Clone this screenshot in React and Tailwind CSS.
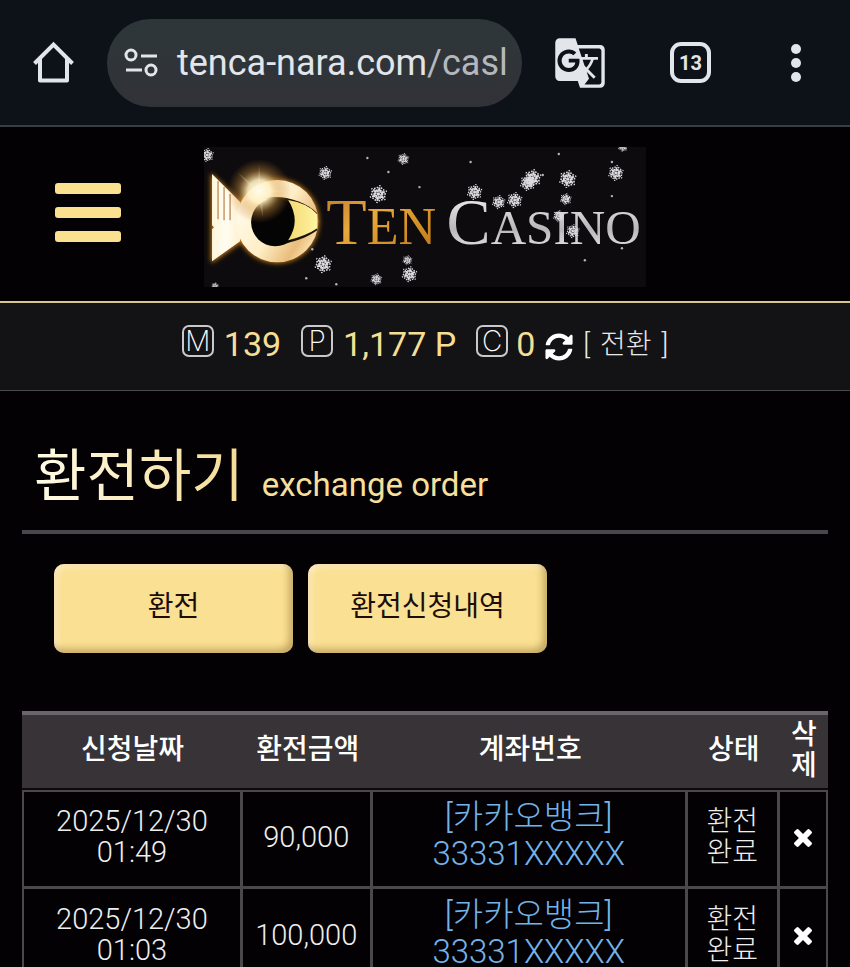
import { MdGTranslate } from "react-icons/md";
import { FaSyncAlt } from "react-icons/fa";

const orders = [
  { id: 1, date: "2025/12/30", time: "01:49", amount: "90,000", bank: "카카오뱅크", account: "33331XXXXX" },
  { id: 2, date: "2025/12/30", time: "01:03", amount: "100,000", bank: "카카오뱅크", account: "33331XXXXX" },
];

// x, y, radius
const flakes = [
  [3, 8, 7],
  [121, 26, 7],
  [199, 12, 6],
  [174, 47, 9],
  [119, 117, 9],
  [172, 132, 6],
  [203, 113, 5],
  [205, 127, 8],
  [11, 139, 4],
  [270, 45, 8],
  [294, 55, 7],
  [310, 53, 8],
  [328, 31, 9],
  [323, 36, 8],
  [325, 34, 5],
  [363, 32, 9],
  [361, 52, 6],
  [354, 69, 6],
  [368, 84, 7],
  [411, 26, 8],
  [418, 0, 5],
];

const specks = [
  [163, 11], [184, 25], [215, 40], [108, 102], [102, 131], [132, 137],
  [266, 15], [354, 7], [338, 28], [407, 49], [407, 15], [380, 113], [417, 101], [357, 84],
];

const Snowflake = ({ x, y, r }) => (
  <g transform={`translate(${x} ${y}) scale(${r / 10})`} stroke="#dcdce0" strokeWidth="1.8" fill="none">
    {[10, 70, 130, 190, 250, 310].map((deg) => (
      <path
        key={deg}
        transform={`rotate(${deg})`}
        strokeDasharray="1.8 1.1"
        d="M0 0V-10M0 -4L-3 -8M0 -4L3 -8M-3 -3L0 -6L3 -3"
      />
    ))}
    <circle r="3" strokeDasharray="2 1" />
  </g>
);

const Logo = () => (
  <svg viewBox="0 0 441 140" className="w-full" role="img" aria-label="Ten Casino">
    <defs>
      <linearGradient id="fish" x1="0" y1="0.2" x2="1" y2="0.8">
        <stop offset="0" stopColor="#fffdf0" />
        <stop offset="0.5" stopColor="#ffeec6" />
        <stop offset="0.8" stopColor="#e9bd7c" />
        <stop offset="1" stopColor="#fff0c8" />
      </linearGradient>
      <linearGradient id="tail" x1="0" y1="0" x2="1" y2="0">
        <stop offset="0" stopColor="#fff6d8" />
        <stop offset="0.5" stopColor="#fffdf2" />
        <stop offset="1" stopColor="#fff1cf" />
      </linearGradient>
      <linearGradient id="mouth" x1="0" y1="0" x2="1" y2="0">
        <stop offset="0" stopColor="#f4da72" />
        <stop offset="1" stopColor="#fff3a2" />
      </linearGradient>
      <linearGradient id="gold" x1="0" y1="0" x2="1" y2="1">
        <stop offset="0" stopColor="#b9742a" />
        <stop offset="0.4" stopColor="#eba83c" />
        <stop offset="1" stopColor="#b97410" />
      </linearGradient>
      <linearGradient id="silver" x1="0" y1="0" x2="0" y2="1">
        <stop offset="0" stopColor="#ffffff" />
        <stop offset="0.6" stopColor="#b8b8bc" />
        <stop offset="1" stopColor="#f4f4f4" />
      </linearGradient>
      <radialGradient id="flare">
        <stop offset="0" stopColor="#fffdf0" />
        <stop offset="0.35" stopColor="#fff0c0" stopOpacity="0.9" />
        <stop offset="0.65" stopColor="#d99a45" stopOpacity="0.4" />
        <stop offset="1" stopColor="#b87320" stopOpacity="0" />
      </radialGradient>
      <filter id="glow" x="-20%" y="-20%" width="140%" height="140%">
        <feGaussianBlur stdDeviation="2.5" />
      </filter>
    </defs>

    <rect width="441" height="140" fill="#0d0b0d" />

    {/* fish */}
    <g filter="url(#glow)" fill="#c57a1e">
      <path d="M7 26L36 54V96L7 116Z" />
      <circle cx="73" cy="74" r="42" />
    </g>
    <path d="M8 27L36 55V94L8 114V82L10 80L8 78Z" fill="url(#tail)" />
    <path d="M14 34V72M20 40V73M26 47V73" stroke="#a8672a" strokeWidth="1" />
    <circle cx="73" cy="74" r="41" fill="url(#fish)" />
    <path d="M62 51C76 47 100 53 113 66V83C102 91 88 95 78 97Z" fill="#1d1306" />
    <circle cx="71" cy="75" r="24" fill="#050405" />
    <path d="M84 53Q103 56 113 67V81Q103 88 84 93Q97 74 84 53Z" fill="url(#mouth)" />
    <circle cx="55" cy="44" r="32" fill="url(#flare)" />
    <path d="M55 18L57 41L80 44L58 47L59 70L53 48L30 60L50 44L34 26L53 40Z" fill="#fff6d5" opacity="0.2" />

    <g fontFamily="'Liberation Serif', serif">
      <text x="122" y="97" fontSize="66" fill="url(#gold)">
        T<tspan fontSize="52">EN</tspan>
      </text>
      <text x="242" y="97" fontSize="66" fill="url(#silver)">
        C<tspan fontSize="49">ASINO</tspan>
      </text>
    </g>

    {flakes.map(([x, y, r]) => (
      <Snowflake key={`${x}-${y}`} x={x} y={y} r={r} />
    ))}
    <g fill="#b5b5b8">
      {specks.map(([x, y]) => (
        <circle key={`${x}-${y}`} cx={x} cy={y} r="1.2" />
      ))}
    </g>
  </svg>
);

const BrowserBar = () => (
  <div className="flex items-center h-[127px] pl-8 pr-[45px] border-b-2 border-[#3c3d40] bg-[#0d1118] text-[#e2e5ea]">
    <button aria-label="Home" className="shrink-0">
      <svg viewBox="0 0 44 44" className="w-11 h-11" fill="none" stroke="currentColor" strokeWidth="4">
        <path d="M2.5 22.5L21.5 3.5L40.5 22.5" />
        <path d="M8 18V39.5H35V18" strokeLinejoin="round" />
      </svg>
    </button>
    <div className="flex items-center flex-1 min-w-0 h-[88px] ml-[31px] pl-4 pr-2 rounded-full bg-linear-to-b from-[#2e3639] to-[#313237]">
      <button aria-label="Site settings" className="shrink-0">
        <svg viewBox="0 0 38 32" className="w-[38px] h-8" fill="none" stroke="currentColor" strokeWidth="3">
          <circle cx="8" cy="8" r="5" />
          <path d="M18 9H34M3 23H19" />
          <circle cx="28" cy="23" r="5" />
        </svg>
      </button>
      <p className="ml-4 whitespace-nowrap text-4xl leading-[48px]">
        tenca-nara.com<span className="text-[#b4b8bd]">/casl</span>
      </p>
    </div>
    <button aria-label="Translate" className="shrink-0 ml-[31px]">
      <MdGTranslate className="w-[54px] h-[54px]" />
    </button>
    <button
      aria-label="13 open tabs"
      className="shrink-0 flex items-center justify-center w-[41px] h-[41px] ml-[63px] rounded-[11px] border-4 border-current text-xl font-bold"
    >
      13
    </button>
    <button aria-label="Menu" className="shrink-0 ml-[76px]">
      <svg viewBox="0 0 18 40" className="w-[18px] h-10" fill="currentColor">
        <circle cx="9" cy="6" r="5" />
        <circle cx="9" cy="20" r="5" />
        <circle cx="9" cy="34" r="5" />
      </svg>
    </button>
  </div>
);

const Badge = ({ children }) => (
  <span className="flex items-center justify-center w-8 h-8 mb-2 rounded-[7px] border-2 border-[#c9c9cc] font-[Inter] text-[28px] leading-7 font-extralight text-white">
    {children}
  </span>
);

const SiteHeader = () => (
  <header>
    <div className="grid grid-cols-[1fr_52%_1fr] items-start pt-5 pb-[14px] border-b-2 border-[#d5c68c]">
      <button aria-label="Open menu" className="flex flex-col gap-[13px] w-[66px] mt-9 ml-[55px]">
        <span className="w-full h-[11px] rounded-[3px] bg-[#fbe08f]" />
        <span className="w-full h-[11px] rounded-[3px] bg-[#fbe08f]" />
        <span className="w-full h-[11px] rounded-[3px] bg-[#fbe08f]" />
      </button>
      <a href="#home">
        <Logo />
      </a>
    </div>
    <div className="flex items-center justify-center h-[88px] pb-1 border-b border-[#4b4a4d] bg-[#131214] text-[34px] text-[#f6df95]">
      <Badge>M</Badge>
      <span className="ml-2.5 mr-5">139</span>
      <Badge>P</Badge>
      <span className="ml-2.5 mr-5">1,177 P</span>
      <Badge>C</Badge>
      <span className="ml-2 mr-2.5">0</span>
      <button aria-label="Refresh" className="mt-1 text-white">
        <FaSyncAlt className="w-7 h-7" />
      </button>
      <button className="flex gap-2.5 ml-2.5 text-[28px] font-light text-[#e8e8e8]">
        <span>[</span>
        <span>전환</span>
        <span>]</span>
      </button>
    </div>
  </header>
);

const TabButton = ({ children }) => (
  <button className="w-[239px] h-[89px] pb-1 rounded-[10px] bg-[#fae092] text-[28px] text-[#1c0d0a] shadow-[inset_-4px_-4px_7px_rgba(130,100,40,0.45),inset_3px_3px_6px_rgba(255,240,215,0.7)]">
    {children}
  </button>
);

const CloseMark = () => (
  <svg viewBox="302 366 1188 1188" className="w-[18px] h-[18px]" fill="currentColor">
    <path d="M1490 1322q0 40-28 68l-136 136q-28 28-68 28t-68-28l-294-294-294 294q-28 28-68 28t-68-28l-136-136q-28-28-28-68t28-68l294-294-294-294q-28-28-28-68t28-68l136-136q28-28 68-28t68 28l294 294 294-294q28-28 68-28t68 28l136 136q28 28 28 68t-28 68l-294 294 294 294q28 28 28 68z" />
  </svg>
);

const OrderTable = () => (
  <table className="w-full mt-[58px] table-fixed border-separate border-spacing-0 text-center">
    <thead className="text-[28px] leading-[31px] text-white">
      <tr className="h-[79px] [&>th]:bg-[#373337] [&>th]:border-t-4 [&>th]:border-b-2 [&>th]:border-t-[#68666a] [&>th]:border-b-[#0b090b] [&>th]:px-0 [&>th]:pt-0 [&>th]:pb-1 [&>th]:font-medium">
        <th className="w-[27.4%]">신청날짜</th>
        <th className="w-[16.1%]">환전금액</th>
        <th className="w-[39.1%]">계좌번호</th>
        <th className="w-[11.4%]">상태</th>
        <th className="px-2!">삭제</th>
      </tr>
    </thead>
    <tbody className="text-[29px] leading-[31px] font-light text-[#eeeeef] [&_td]:border-[#4a484b] [&_td]:border-r-[3px] [&_td]:border-b-[3px] [&_td:first-child]:border-l-2 [&_td:last-child]:border-r-2 [&>tr:first-child>td]:border-t-2">
      {orders.map((order) => (
        <tr key={order.id} className="h-[99px]">
          <td className="pb-1">
            {order.date}
            <br />
            {order.time}
          </td>
          <td className="pb-1">{order.amount}</td>
          <td className="pb-2 text-[33px] leading-[37px] text-[#72b4ea]">
            <a href={`#order-${order.id}`}>
              [{order.bank}]
              <br />
              {order.account}
            </a>
          </td>
          <td className="px-4 pb-1 text-[28px]">환전 완료</td>
          <td className="pb-1">
            <button aria-label="삭제" className="text-white">
              <CloseMark />
            </button>
          </td>
        </tr>
      ))}
    </tbody>
  </table>
);

const App = () => {
  return (
    <div className="min-h-screen bg-[#030103] font-[Roboto,'Noto_Sans_CJK_KR',sans-serif]">
      <BrowserBar />
      <SiteHeader />
      <main className="px-[22px] pt-[51px]">
        <h1 className="flex items-baseline gap-[18px] h-[92px] pl-3 border-b-4 border-[#49474b] text-[#f6df9b]">
          <span className="text-[57px] leading-[70px] font-normal bg-linear-to-r from-[#fffbe6] to-[#f5dc92] bg-clip-text text-transparent">
            환전하기
          </span>
          <span className="text-[33px]">exchange order</span>
        </h1>
        <div className="flex flex-wrap gap-[15px] pt-[30px] pl-8">
          <TabButton>환전</TabButton>
          <TabButton>환전신청내역</TabButton>
        </div>
        <OrderTable />
      </main>
    </div>
  );
};

export default App;
